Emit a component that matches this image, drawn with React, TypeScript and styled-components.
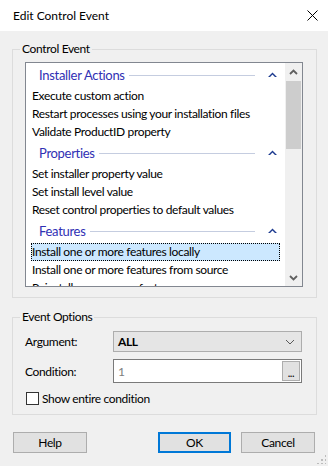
import styled, { createGlobalStyle } from 'styled-components'

const GlobalStyle = createGlobalStyle`
    html, body {
        margin: 0;
        padding: 0;
        background: #f0f0f0;
    }
    body {
        font-family: Lato, 'Noto Sans', 'Liberation Sans', sans-serif;
        font-size: 12px;
        color: #000;
    }
`

const Window = styled.div`
    width: 328px;
    height: 466px;
    background: #f0f0f0;
    position: relative;
    overflow: hidden;
    letter-spacing: -0.35px;
`

const TitleBar = styled.div`
    height: 31px;
    background: #fff;
    display: flex;
    align-items: center;
    justify-content: space-between;
    padding: 0 10px 0 13px;
    font-size: 12px;
    letter-spacing: 0;
`

const CloseIcon = () => (
    <svg width="11" height="11" viewBox="0 0 11 11">
        <path d="M0.5 0.5 L10.5 10.5 M10.5 0.5 L0.5 10.5" stroke="#000" strokeWidth="1" />
    </svg>
)

const Body = styled.div`
    padding: 0 11px 0 12px;
`

const Group = styled.div<{ $top: number; $height: number; $pad: string }>`
    position: relative;
    margin-top: ${p => p.$top}px;
    height: ${p => p.$height}px;
    box-sizing: border-box;
    border: 1px solid #dcdcdc;
    padding: ${p => p.$pad};
`

const Legend = styled.span`
    position: absolute;
    top: -9px;
    left: 7px;
    padding: 0 2px;
    background: #f0f0f0;
    line-height: 16px;
`

const ListBox = styled.div`
    display: flex;
    height: 225px;
    width: 278px;
    box-sizing: border-box;
    border: 1px solid #828790;
    background: #fff;
`

const Items = styled.div`
    flex: 1;
    overflow: hidden;
`

const GroupHeader = styled.div`
    height: 24px;
    display: flex;
    align-items: center;
    padding: 0 8px 0 13px;
    color: #3030b4;
    font-size: 13px;
    letter-spacing: -0.3px;
    gap: 4px;
`

const HeaderLine = styled.div`
    flex: 1;
    height: 1px;
    background: #c5cde0;
    margin-right: 9px;
`

const Item = styled.div<{ $selected?: boolean }>`
    height: 18px;
    line-height: 16px;
    margin: 0 5px;
    border: 1px ${p => (p.$selected ? 'dotted #000' : 'solid transparent')};
    box-sizing: border-box;
    background: ${p => (p.$selected ? '#cce8ff' : 'transparent')};
    white-space: nowrap;
`

const ScrollBar = styled.div`
    width: 17px;
    background: #f0f0f0;
    display: flex;
    flex-direction: column;
`

const ScrollArrow = styled.div`
    height: 17px;
    display: flex;
    align-items: center;
    justify-content: center;
`

const Thumb = styled.div`
    height: 68px;
    margin: 1px 1px 0 1px;
    background: #cdcdcd;
`

const Track = styled.div`
    flex: 1;
`

const BlueCaret = () => (
    <svg width="9" height="6" viewBox="0 0 9 6">
        <path d="M0 5 L4.5 0.5 L9 5 L7 5 L4.5 2.5 L2 5 Z" fill="#1c3a8f" />
    </svg>
)

const GreyChevron = ({ down }: { down?: boolean }) => (
    <svg width="9" height="6" viewBox="0 0 9 6">
        <path
            d={down ? 'M1 1 L4.5 4.5 L8 1' : 'M1 5 L4.5 1.5 L8 5'}
            stroke="#606060"
            strokeWidth="1.8"
            fill="none"
        />
    </svg>
)

const FormRow = styled.div<{ $gap: number }>`
    display: flex;
    align-items: center;
    margin-top: ${p => p.$gap}px;
`

const Label = styled.div`
    width: 88px;
`

const Select = styled.div`
    width: 189px;
    height: 21px;
    box-sizing: border-box;
    border: 1px solid #adadad;
    background: #e5e5e5;
    display: flex;
    align-items: center;
    justify-content: space-between;
    padding: 0 6px 0 4px;
    font-weight: 700;
`

const ThinChevron = () => (
    <svg width="10" height="6" viewBox="0 0 10 6">
        <path d="M1 1 L5 5 L9 1" stroke="#5a5a5a" strokeWidth="1" fill="none" />
    </svg>
)

const TextField = styled.div`
    width: 189px;
    height: 24px;
    box-sizing: border-box;
    border: 1px solid #7a7a7a;
    background: #fff;
    display: flex;
    align-items: center;
    justify-content: space-between;
    padding: 0 1px 0 4px;
    color: #7d7d7d;
`

const BrowseButton = styled.div`
    width: 18px;
    height: 20px;
    box-sizing: border-box;
    border: 1px solid #adadad;
    background: #e1e1e1;
    display: flex;
    align-items: flex-end;
    justify-content: center;
    font-size: 11px;
    line-height: 14px;
    color: #000;
`

const CheckRow = styled.label`
    display: flex;
    align-items: center;
    gap: 3px;
    margin-top: 8px;
    margin-left: 1px;
`

const Box = styled.span`
    width: 13px;
    height: 13px;
    box-sizing: border-box;
    border: 1px solid #333;
    background: #fff;
`

const ButtonBar = styled.div`
    display: flex;
    justify-content: space-between;
    margin-top: 17px;
    padding: 0 2px 0 1px;
`

const ButtonGroup = styled.div`
    display: flex;
    gap: 10px;
`

const Button = styled.div<{ $default?: boolean }>`
    width: ${p => (p.$default ? 73 : 74)}px;
    height: 21px;
    box-sizing: border-box;
    border: ${p => (p.$default ? '2px solid #0078d7' : '1px solid #adadad')};
    background: #e1e1e1;
    display: flex;
    align-items: center;
    justify-content: center;
`

const SizeGrip = styled.div`
    position: absolute;
    right: 2px;
    bottom: 2px;
    width: 10px;
    height: 10px;
    background:
        radial-gradient(circle, #bcbcbc 1px, transparent 1.2px) 0 0 / 4px 4px;
    clip-path: polygon(100% 0, 100% 100%, 0 100%);
`

const groups: { title: string; items: string[] }[] = [
    {
        title: 'Installer Actions',
        items: ['Execute custom action', 'Restart processes using your installation files', 'Validate ProductID property'],
    },
    {
        title: 'Properties',
        items: ['Set installer property value', 'Set install level value', 'Reset control properties to default values'],
    },
    {
        title: 'Features',
        items: ['Install one or more features locally', 'Install one or more features from source', 'Reinstall one or more features'],
    },
]

export default function App() {
    return (
        <Window>
            <GlobalStyle />
            <TitleBar>
                <span>Edit Control Event</span>
                <CloseIcon />
            </TitleBar>
            <Body>
                <Group $top={18} $height={249} $pad="12px 12px 0 12px">
                    <Legend>Control Event</Legend>
                    <ListBox>
                        <Items>
                            {groups.map(g => (
                                <div key={g.title}>
                                    <GroupHeader>
                                        <span>{g.title}</span>
                                        <HeaderLine />
                                        <BlueCaret />
                                    </GroupHeader>
                                    {g.items.map(it => (
                                        <Item key={it} $selected={it === 'Install one or more features locally'}>
                                            {it}
                                        </Item>
                                    ))}
                                </div>
                            ))}
                        </Items>
                        <ScrollBar>
                            <ScrollArrow>
                                <GreyChevron />
                            </ScrollArrow>
                            <Thumb />
                            <Track />
                            <ScrollArrow>
                                <GreyChevron down />
                            </ScrollArrow>
                        </ScrollBar>
                    </ListBox>
                </Group>
                <Group $top={19} $height={98} $pad="13px 12px 0 12px">
                    <Legend>Event Options</Legend>
                    <FormRow $gap={0}>
                        <Label>Argument:</Label>
                        <Select>
                            <span>ALL</span>
                            <ThinChevron />
                        </Select>
                    </FormRow>
                    <FormRow $gap={7}>
                        <Label>Condition:</Label>
                        <TextField>
                            <span>1</span>
                            <BrowseButton>...</BrowseButton>
                        </TextField>
                    </FormRow>
                    <CheckRow>
                        <Box />
                        <span>Show entire condition</span>
                    </CheckRow>
                </Group>
                <ButtonBar>
                    <Button>Help</Button>
                    <ButtonGroup>
                        <Button $default>OK</Button>
                        <Button>Cancel</Button>
                    </ButtonGroup>
                </ButtonBar>
            </Body>
            <SizeGrip />
        </Window>
    )
}
